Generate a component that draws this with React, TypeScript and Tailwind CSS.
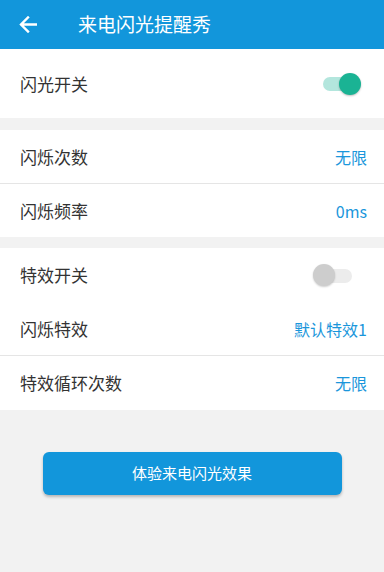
import React from 'react';

const font = { fontFamily: '"Noto Sans CJK SC", "Noto Sans", sans-serif' };

function Switch({ on }: { on: boolean }) {
  return on ? (
    <div className="relative w-[40px] h-[24px] mr-[6px]">
      <div className="absolute left-[2px] top-[5px] w-[36px] h-[14px] rounded-full bg-[#b3e6dd]" />
      <div className="absolute right-[0px] top-[1px] w-[22px] h-[22px] rounded-full bg-[#1ab394] shadow-[0_1px_2px_rgba(0,0,0,0.25)]" />
    </div>
  ) : (
    <div className="relative w-[40px] h-[24px] mr-[14px]">
      <div className="absolute left-[3px] top-[6px] w-[36px] h-[14px] rounded-full bg-[#ececec]" />
      <div className="absolute left-[0px] top-[1px] w-[22px] h-[22px] rounded-full bg-[#cdcdcd] shadow-[0_1px_2px_rgba(0,0,0,0.2)]" />
    </div>
  );
}

function Row({ label, value, h, children }: { label: string; value?: string; h: string; children?: React.ReactNode }) {
  return (
    <div className={`flex items-center justify-between pl-[20px] pr-[17px] ${h}`}>
      <span className="text-[17px] text-[#333333]">{label}</span>
      {value && <span className="text-[16px] text-[#1a96db]">{value}</span>}
      {children}
    </div>
  );
}

export default function App() {
  return (
    <div className="w-[384px] h-[572px] bg-[#f2f2f2] flex flex-col" style={font}>
      <div className="h-[49px] bg-[#1296db] flex items-center">
        <svg className="ml-[19px]" width="18" height="17" viewBox="0 0 18 17" fill="none">
          <path d="M17 8.5H2.5M9 1.5L2 8.5L9 15.5" stroke="white" strokeWidth="2.4" strokeLinecap="square" />
        </svg>
        <span className="ml-[41px] text-[19px] text-white">来电闪光提醒秀</span>
      </div>

      <div className="bg-white">
        <Row label="闪光开关" h="h-[69px]">
          <Switch on />
        </Row>
      </div>

      <div className="bg-white mt-[12px]">
        <Row label="闪烁次数" value="无限" h="h-[53px]" />
        <div className="h-px bg-[#e5e5e5]" />
        <Row label="闪烁频率" value="0ms" h="h-[53px]" />
      </div>

      <div className="bg-white mt-[11px]">
        <Row label="特效开关" h="h-[54px]">
          <Switch on={false} />
        </Row>
        <Row label="闪烁特效" value="默认特效1" h="h-[53px]" />
        <div className="h-px bg-[#e5e5e5]" />
        <Row label="特效循环次数" value="无限" h="h-[54px]" />
      </div>

      <div className="flex justify-center mt-[42px]">
        <button className="w-[299px] h-[43px] rounded-[6px] bg-[#1296db] text-white text-[15px] shadow-[0_2px_3px_rgba(0,0,0,0.25)]">
          体验来电闪光效果
        </button>
      </div>
    </div>
  );
}
